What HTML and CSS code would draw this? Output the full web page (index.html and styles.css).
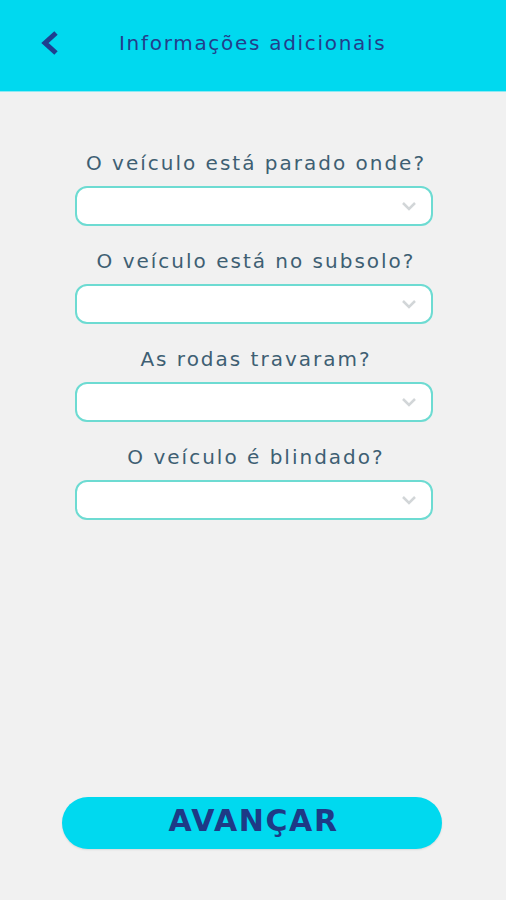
FILE: index.html
```html
<!DOCTYPE html>
<html lang="pt">
<head>
<meta charset="utf-8">
<link rel="stylesheet" href="styles.css">
</head>
<body>
<div class="app">
  <header class="header">
    <svg class="back" width="22" height="24" viewBox="0 0 22 24"><path d="M16 2 L5 12 L16 22" fill="none" stroke="#1f3f8f" stroke-width="5" stroke-linejoin="miter"/></svg>
    <h1 class="title">Informações adicionais</h1>
  </header>
  <main class="form">
    <div class="field">
      <label class="label">O veículo está parado onde?</label>
      <div class="select"><svg class="chev" width="16" height="10" viewBox="0 0 16 10"><path d="M2 2 L8 8 L14 2" fill="none" stroke="#d2d6d8" stroke-width="2.5"/></svg></div>
    </div>
    <div class="field">
      <label class="label">O veículo está no subsolo?</label>
      <div class="select"><svg class="chev" width="16" height="10" viewBox="0 0 16 10"><path d="M2 2 L8 8 L14 2" fill="none" stroke="#d2d6d8" stroke-width="2.5"/></svg></div>
    </div>
    <div class="field">
      <label class="label">As rodas travaram?</label>
      <div class="select"><svg class="chev" width="16" height="10" viewBox="0 0 16 10"><path d="M2 2 L8 8 L14 2" fill="none" stroke="#d2d6d8" stroke-width="2.5"/></svg></div>
    </div>
    <div class="field">
      <label class="label">O veículo é blindado?</label>
      <div class="select"><svg class="chev" width="16" height="10" viewBox="0 0 16 10"><path d="M2 2 L8 8 L14 2" fill="none" stroke="#d2d6d8" stroke-width="2.5"/></svg></div>
    </div>
  </main>
  <div class="footer">
    <button class="btn">AVANÇAR</button>
  </div>
</div>
</body>
</html>
```
FILE: styles.css
```css
* { box-sizing: border-box; }
html, body { margin: 0; padding: 0; }
body {
  background: #f1f1f1;
  font-family: "DejaVu Sans", "Noto Sans", sans-serif;
  width: 506px;
  height: 900px;
  overflow: hidden;
}
.app {
  display: flex;
  flex-direction: column;
  height: 900px;
}
.header {
  height: 92px;
  background: #00d9ef;
  display: flex;
  align-items: center;
  padding-left: 40px;
  border-bottom: 1px solid #8ee9f2;
}
.back { display: block; margin-top: -6px; }
.title {
  margin: -6px 0 0 57px;
  font-size: 20px;
  font-weight: normal;
  color: #233e8b;
  letter-spacing: 1.7px;
}
.form {
  display: flex;
  flex-direction: column;
  gap: 23px;
  padding: 59px 73px 0 75px;
}
.field {
  display: flex;
  flex-direction: column;
  align-items: center;
  gap: 11px;
}
.label {
  font-size: 20px;
  color: #3e5f73;
  letter-spacing: 2px;
  line-height: 24px;
  padding-left: 4px;
}
.select {
  width: 100%;
  height: 40px;
  background: #ffffff;
  border: 2px solid #6ddbd2;
  border-radius: 12px;
  display: flex;
  align-items: center;
  justify-content: flex-end;
  padding-right: 14px;
}
.footer {
  margin-top: auto;
  padding: 0 64px 51px 62px;
}
.btn {
  width: 100%;
  height: 52px;
  border: none;
  border-radius: 26px;
  background: #00d9ef;
  color: #1e3a86;
  font-family: "DejaVu Sans", sans-serif;
  font-weight: bold;
  font-size: 30px;
  letter-spacing: 1.6px;
  padding: 0 0 5px 3px;
  box-shadow: 0 1px 2px rgba(0,0,0,0.1);
}
```
